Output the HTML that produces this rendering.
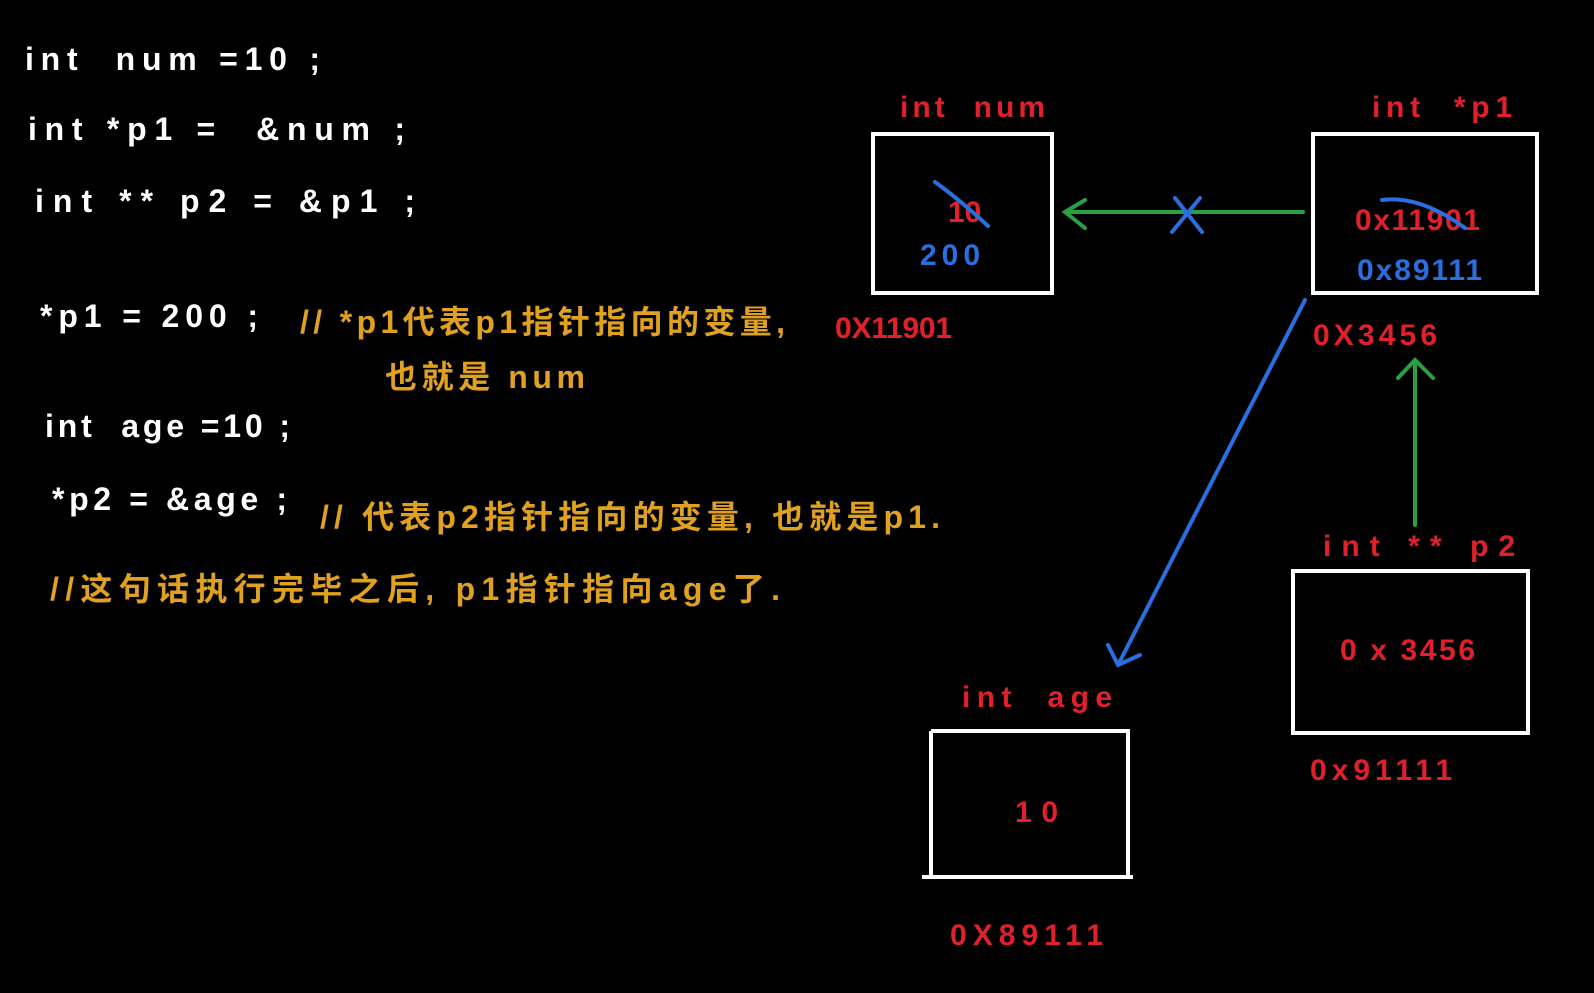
<!DOCTYPE html>
<html><head><meta charset="utf-8"><style>
html,body{margin:0;padding:0;background:#000;width:1594px;height:993px;overflow:hidden}
svg{display:block}
text{font-family:"Liberation Sans","Noto Sans CJK SC",sans-serif;font-weight:bold}
.w{fill:#fff;font-size:32px}
.o{fill:#e0a020;font-size:32px}
.r{fill:#e0202a;font-size:30px}
.b{fill:#2a6fe0;font-size:30px}
</style></head><body>
<svg width="1594" height="993" viewBox="0 0 1594 993">
<rect width="1594" height="993" fill="#000"/>
<text class="w" x="25" y="70" textLength="295" lengthAdjust="spacing">int&#160;&#160;num =10 ;</text>
<text class="w" x="28" y="140" textLength="377" lengthAdjust="spacing">int *p1 =&#160;&#160;&amp;num ;</text>
<text class="w" x="35" y="212" textLength="380" lengthAdjust="spacing">int ** p2 = &amp;p1 ;</text>
<text class="w" x="40" y="327" textLength="218" lengthAdjust="spacing">*p1 = 200 ;</text>
<text class="w" x="45" y="437" textLength="245" lengthAdjust="spacing">int&#160;&#160;age =10 ;</text>
<text class="w" x="52" y="510" textLength="235" lengthAdjust="spacing">*p2 = &amp;age ;</text>
<text class="o" x="300" y="333" textLength="485" lengthAdjust="spacing">// *p1代表p1指针指向的变量,</text>
<text class="o" x="385" y="388" textLength="200" lengthAdjust="spacing">也就是 num</text>
<text class="o" x="320" y="528" textLength="620" lengthAdjust="spacing">// 代表p2指针指向的变量, 也就是p1.</text>
<text class="o" x="50" y="600" textLength="730" lengthAdjust="spacing">//这句话执行完毕之后, p1指针指向age了.</text>

<g fill="none" stroke="#fff" stroke-width="4">
<rect x="873" y="134" width="179" height="159"/>
<rect x="1313" y="134" width="224" height="159"/>
<rect x="1293" y="571" width="235" height="162"/>
<path d="M931 731 H1128 V877 M931 731 V877 M922 877 H1133"/>
</g>
<text class="r" x="900" y="117" textLength="145" lengthAdjust="spacing">int&#160;&#160;num</text>
<text class="r" x="1372" y="117" textLength="140" lengthAdjust="spacing">int&#160;&#160;*p1</text>
<text class="r" x="1323" y="556" textLength="192" lengthAdjust="spacing">int ** p2</text>
<text class="r" x="962" y="707" textLength="150" lengthAdjust="spacing">int&#160;&#160;age</text>
<text class="r" x="948" y="222">10</text>
<text class="b" x="920" y="265" textLength="60" lengthAdjust="spacing">200</text>
<text class="r" x="835" y="338" textLength="117" lengthAdjust="spacing">0X11901</text>
<text class="r" x="1355" y="230" textLength="125" lengthAdjust="spacing">0x11901</text>
<text class="b" x="1357" y="280" textLength="125" lengthAdjust="spacing">0x89111</text>
<text class="r" x="1313" y="345" textLength="124" lengthAdjust="spacing">0X3456</text>
<text class="r" x="1340" y="660" textLength="135" lengthAdjust="spacing">0 x 3456</text>
<text class="r" x="1310" y="780" textLength="142" lengthAdjust="spacing">0x91111</text>
<text class="r" x="1015" y="822" textLength="43" lengthAdjust="spacing">10</text>
<text class="r" x="950" y="945" textLength="153" lengthAdjust="spacing">0X89111</text>

<g fill="none" stroke-width="4" stroke-linecap="round">
<path d="M935 182 Q960 200 988 226" stroke="#2a6fe0"/>
<path d="M1382 200 Q1420 195 1465 228" stroke="#2a6fe0"/>
<path d="M1303 212 H1065 M1085 200 L1065 212 L1085 228" stroke="#2aa040"/>
<path d="M1175 198 L1202 232 M1200 198 L1172 232" stroke="#2a6fe0"/>
<path d="M1305 300 L1118 665 M1108 645 L1118 665 L1140 655" stroke="#2a6fe0"/>
<path d="M1415 525 V360 M1398 378 L1415 360 L1433 378" stroke="#2aa040"/>
</g>
</svg>
</body></html>
